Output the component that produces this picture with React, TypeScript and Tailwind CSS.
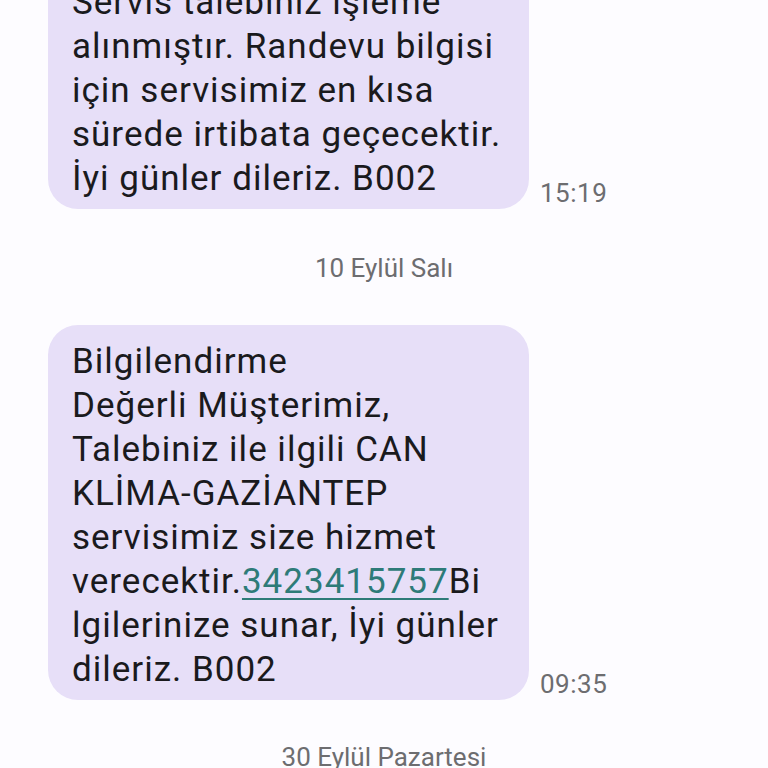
import React from "react";

const font = { fontFamily: "Roboto, 'Noto Sans', sans-serif" };

function Bubble({ lines, time, className }: { lines: React.ReactNode[]; time: string; className?: string }) {
  return (
    <div className={"flex items-end pl-[48px] " + (className || "")}>
      <div className="w-[481px] rounded-[30px] bg-[#e7dff8] pl-[24px] pt-[15px] pb-[8px] text-[35px] leading-[44px] tracking-[1px] text-[#1a1a1d]">
        {lines.map((l, i) => (
          <div key={i} className="whitespace-nowrap">{l}</div>
        ))}
      </div>
      <div className="ml-[11px] mb-0 text-[26px] leading-[32px] tracking-[0.5px] text-[#6d6d70]">{time}</div>
    </div>
  );
}

export default function App() {
  return (
    <div style={font} className="w-[768px] h-[768px] overflow-hidden bg-[#fdfcff]">
      <Bubble
        className="-mt-[34px]"
        time="15:19"
        lines={[
          "Servis talebiniz işleme",
          "alınmıştır. Randevu bilgisi",
          "için servisimiz en kısa",
          "sürede irtibata geçecektir.",
          "İyi günler dileriz. B002",
        ]}
      />
      <div className="mt-[44px] text-center text-[26px] leading-[30px] text-[#6d6d70]">10 Eylül Salı</div>
      <Bubble
        className="mt-[42px]"
        time="09:35"
        lines={[
          "Bilgilendirme",
          "Değerli Müşterimiz,",
          "Talebiniz ile ilgili CAN",
          "KLİMA-GAZİANTEP",
          "servisimiz size hizmet",
          <>
            verecektir.<span className="text-[#2e7b78] underline decoration-[2px] underline-offset-[5px]">3423415757</span>Bi
          </>,
          "lgilerinize sunar, İyi günler",
          "dileriz. B002",
        ]}
      />
      <div className="mt-[42px] text-center text-[26px] leading-[30px] text-[#6d6d70]">30 Eylül Pazartesi</div>
    </div>
  );
}
